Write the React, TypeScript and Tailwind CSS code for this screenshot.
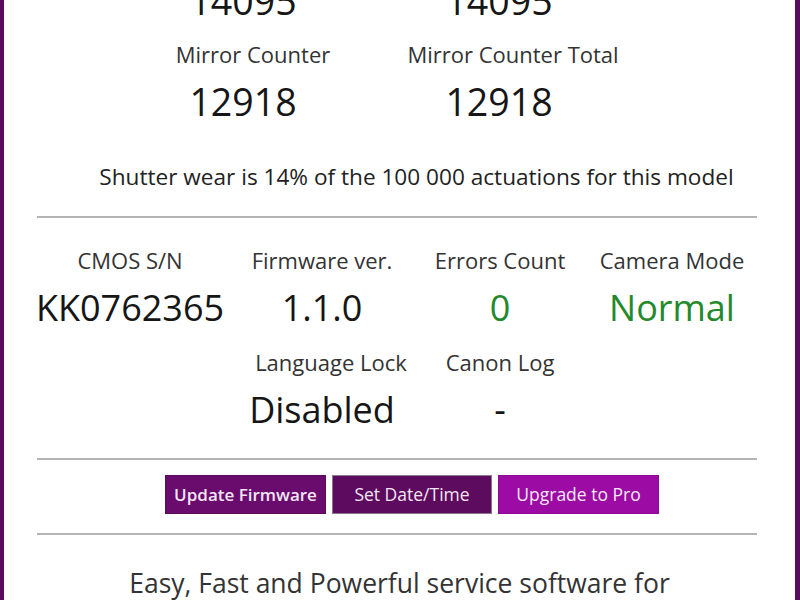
const font = { fontFamily: '"Open Sans", "Noto Sans", sans-serif' };

function Counter({ label, value, labelClass }: { label: string; value: string; labelClass: string }) {
  return (
    <div className="flex flex-col items-center">
      <p className={labelClass}>{label}</p>
      <p className="mt-[10px] h-[48px] text-[37.5px] leading-[48px] text-[#161616]">{value}</p>
    </div>
  );
}

function Info({
  label,
  value,
  green,
  shift,
}: {
  label: string;
  value: string;
  green?: boolean;
  shift?: boolean;
}) {
  return (
    <div className="flex flex-col items-center">
      <p
        className={
          shift
            ? "ml-[18px] h-[28px] whitespace-nowrap text-[22px] leading-[28px] text-[#333333]"
            : "h-[28px] whitespace-nowrap text-[22px] leading-[28px] text-[#333333]"
        }
      >
        {label}
      </p>
      <p
        className={
          green
            ? "mt-[10px] h-[48px] text-[36px] leading-[48px] text-[#23892a]"
            : "mt-[10px] h-[48px] text-[36px] leading-[48px] text-[#161616]"
        }
      >
        {value}
      </p>
    </div>
  );
}

function Divider() {
  return <div className="ml-[33px] mr-[38px] h-[2px] bg-[#b4b4b4]" />;
}

export default function App() {
  return (
    <div
      className="flex h-[600px] w-[800px] overflow-hidden border-l-[4px] border-r-[5px] border-[#5b0b5f] bg-white"
      style={font}
    >
      <div className="flex min-w-0 flex-1 flex-col">
        {/* counters */}
        <div className="-mt-[23px] flex gap-[46px] pl-[139px]">
          <div className="flex w-[200px] flex-col items-center">
            <p className="h-[48px] text-[37.5px] leading-[48px] text-[#161616]">14095</p>
            <Counter
              label="Mirror Counter"
              value="12918"
              labelClass="ml-[20px] mt-[15px] h-[28px] whitespace-nowrap text-[22px] leading-[28px] text-[#333333]"
            />
          </div>
          <div className="flex w-[220px] flex-col items-center">
            <p className="h-[48px] text-[37.5px] leading-[48px] text-[#161616]">14095</p>
            <Counter
              label="Mirror Counter Total"
              value="12918"
              labelClass="ml-[28px] mt-[15px] h-[28px] whitespace-nowrap text-[22px] leading-[28px] text-[#333333]"
            />
          </div>
        </div>

        <p className="mt-[37px] h-[28px] whitespace-nowrap pl-[34px] text-center text-[22.6px] leading-[28px] text-[#222222]">
          Shutter wear is 14% of the 100 000 actuations for this model
        </p>

        <div className="mt-[25px]">
          <Divider />
        </div>

        {/* camera info */}
        <div className="ml-[26px] mt-[28px] grid grid-cols-[200px_184px_172px_172px] gap-y-[16px]">
          <Info label="CMOS S/N" value="KK0762365" />
          <Info label="Firmware ver." value="1.1.0" />
          <Info label="Errors Count" value="0" green />
          <Info label="Camera Mode" value="Normal" green />
          <div />
          <Info label="Language Lock" value="Disabled" shift />
          <Info label="Canon Log" value="-" />
        </div>

        <div className="mt-[24px]">
          <Divider />
        </div>

        <div className="ml-[161px] mt-[15px] flex gap-[6px]">
          <button className="h-[39px] w-[161px] border border-[#5a0a5c] bg-[#6a0b6e] text-[17px] font-semibold text-[#f3e6f3]">
            Update Firmware
          </button>
          <button className="h-[39px] w-[160px] border border-[#8a7a8a] bg-[#5c0b5e] text-[17.5px] text-[#f3e6f3]">
            Set Date/Time
          </button>
          <button className="h-[39px] w-[161px] border border-[#8d0a94] bg-[#9c0ba3] text-[17.5px] text-[#f7e8f7]">
            Upgrade to Pro
          </button>
        </div>

        <div className="mt-[19px]">
          <Divider />
        </div>

        <p className="mt-[31px] h-[34px] whitespace-nowrap text-center text-[26.5px] leading-[34px] text-[#333333]">
          Easy, Fast and Powerful service software for
        </p>
      </div>
    </div>
  );
}
